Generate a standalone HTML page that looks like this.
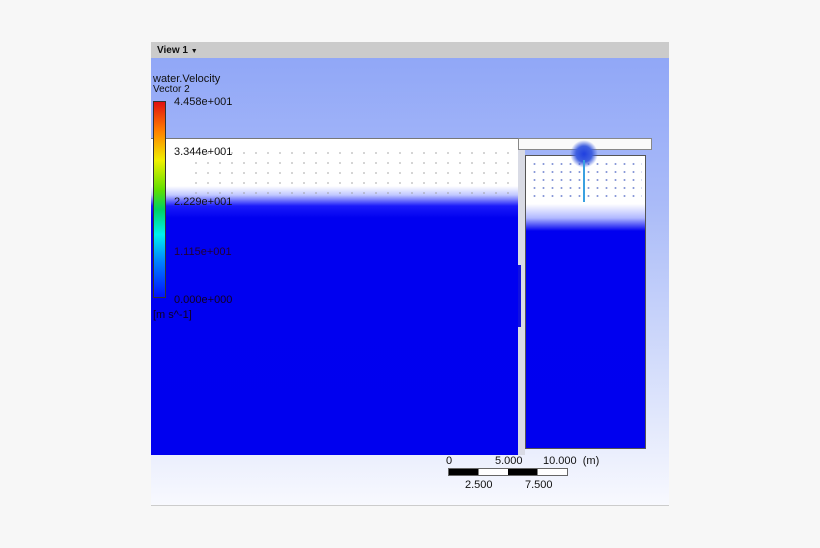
<!DOCTYPE html>
<html><head><style>
body{margin:0;width:820px;height:548px;background:#f7f7f7;position:relative;overflow:hidden;font-family:"Liberation Sans",Arial,sans-serif}
.a{position:absolute}
.t{position:absolute;font-size:11px;color:#111;white-space:nowrap}
</style></head><body>
<div class="a" style="left:151px;top:42px;width:518px;height:464px;background:linear-gradient(#8ea5f7 0%,#aabbf8 35%,#d4ddfb 70%,#f8f9fe 100%)"></div>
<div class="a" style="left:151px;top:505px;width:518px;height:1px;background:#ccc"></div>
<div class="a" style="left:151px;top:42px;width:518px;height:16px;background:#cbcbcb"></div>
<div class="t" style="left:157px;top:45px;font-weight:bold;font-size:10px">View 1 <span style="font-size:7px">▼</span></div>
<!-- left tank -->
<div class="a" style="left:151px;top:138px;width:367px;height:317px;background:linear-gradient(#fff 0px,#fff 48px,#c0c8ff 57px,#1a1afa 68px,#0000f0 80px,#0000ef 100%)"></div>
<div class="a" style="left:190px;top:148px;width:326px;height:46px;background-image:radial-gradient(circle,#999 0.6px,transparent 1px);background-size:12px 10px;opacity:.8"></div>
<div class="a" style="left:151px;top:138px;width:500px;height:1px;background:#777"></div>
<!-- divider -->
<div class="a" style="left:518px;top:150px;width:7px;height:305px;background:#d9dbe5"></div>
<div class="a" style="left:518px;top:265px;width:3px;height:62px;background:#1010e0"></div>
<!-- top bar -->
<div class="a" style="left:518px;top:138px;width:134px;height:12px;background:#fafafa;border:1px solid #888;box-sizing:border-box"></div>
<!-- right tank -->
<div class="a" style="left:525px;top:155px;width:121px;height:294px;background:linear-gradient(#fff 0px,#fff 48px,#b0b8ff 62px,#0000f0 75px,#0000ef 100%);border:1px solid #555;box-sizing:border-box"></div>
<div class="a" style="left:530px;top:160px;width:112px;height:40px;background-image:radial-gradient(circle,#8a9ad8 0.8px,transparent 1.2px);background-size:9px 8px"></div>
<div class="a" style="left:570px;top:140px;width:28px;height:28px;border-radius:50%;background:radial-gradient(circle,#2040e0 0%,#4060e0 40%,transparent 70%)"></div>
<div class="a" style="left:583px;top:160px;width:2px;height:42px;background:#3aa0e0"></div>
<!-- legend -->
<div class="t" style="left:153px;top:73px;font-size:11px">water.Velocity</div>
<div class="t" style="left:153px;top:84px;font-size:10px">Vector 2</div>
<div class="a" style="left:153px;top:101px;width:13px;height:197px;border:1px solid #333;box-sizing:border-box;background:linear-gradient(#e01010,#ff8000 15%,#f0f000 30%,#60e000 45%,#00d060 55%,#00f0f0 68%,#0080ff 82%,#0010ff 100%)"></div>
<div class="t" style="left:174px;top:96px">4.458e+001</div>
<div class="t" style="left:174px;top:146px">3.344e+001</div>
<div class="t" style="left:174px;top:196px">2.229e+001</div>
<div class="t" style="left:174px;top:246px;color:#203">1.115e+001</div>
<div class="t" style="left:174px;top:294px;color:#102">0.000e+000</div>
<div class="t" style="left:153px;top:309px;color:#102">[m s^-1]</div>
<!-- scale -->
<div class="t" style="left:446px;top:455px">0</div>
<div class="t" style="left:495px;top:455px">5.000</div>
<div class="t" style="left:543px;top:455px">10.000 &nbsp;(m)</div>
<div class="a" style="left:448px;top:468px;width:120px;height:8px;border:1px solid #666;box-sizing:border-box;background:linear-gradient(90deg,#000 25%,#fff 25%,#fff 50%,#000 50%,#000 75%,#fff 75%)"></div>
<div class="t" style="left:465px;top:479px">2.500</div>
<div class="t" style="left:525px;top:479px">7.500</div>
</body></html>
